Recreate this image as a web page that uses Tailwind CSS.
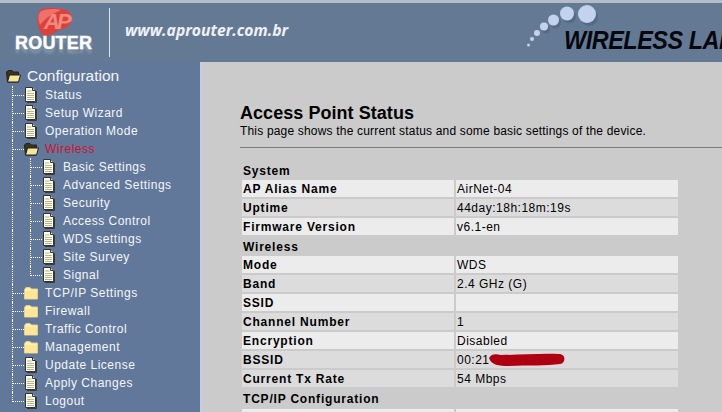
<!DOCTYPE html>
<html><head><meta charset="utf-8"><script src="https://cdn.jsdelivr.net/npm/@tailwindcss/browser@4"></script></head>
<body class="w-[722px] h-[412px] overflow-hidden bg-[#62789a] font-['Liberation_Sans',sans-serif]">
<svg class="hidden" width="0" height="0">
<symbol id="doc" viewBox="0 0 13 16"><path d="M1.500.5H8.500L11.500 3.500V14.500H1.500Z" fill="#fffff0" stroke="#333"/><path d="M8.500 .5V3.500H11.500" fill="#ddd" stroke="#333"/><path d="M3 4H7.500M3 6.500H10M3 8.500H10M3 10.500H10M3 12.500H10" stroke="#b4b484"/><path d="M12.500 4V15.500H3" stroke="#3a3a3a" fill="none"/></symbol>
<symbol id="fold" viewBox="0 0 15 14"><path d="M.5 3.500L2 1.500H6L7.500 3H13.500V13H.5Z" fill="#fff0b0" stroke="#e4cf80"/><path d="M1.500 5H13V12.500H1.500Z" fill="#ffe596"/></symbol>
<symbol id="open" viewBox="0 0 15 14"><path d="M.5 3L2 1.500H6L7.500 3H12.500V13H1.500Z" fill="#3b3418" stroke="#222"/><path d="M1.500 13L3.500 6H14.500L12.500 13Z" fill="#f6e69c" stroke="#222"/></symbol>
</svg>

<header class="h-[62px] relative border-t-[3px] border-[#b5bcc8] bg-[#647a94] overflow-hidden">
  <div class="absolute left-[35px] top-[5px] w-[38px] h-[30px]">
    <svg width="38" height="30" viewBox="0 0 38 30"><path d="M5 2C11-1 20 0 27 1C35 2 38 8 36 14C34 20 28 21 23 22C19 26 12 29 8 27C3 22 0 10 5 2Z" fill="#e0403a"/><path d="M5 4C12 0 21 1 26 2C19 5 11 9 5 17C3 12 3 7 5 4Z" fill="#f2706a"/></svg>
    <span class="absolute left-[9px] top-[2px] text-[22px] italic font-bold text-[#f08a80] tracking-[-3px] leading-[24px]">AP</span>
  </div>
  <span class="absolute left-[15px] top-[31px] font-bold text-[18px] leading-[18px] text-white tracking-[0.2px] [-webkit-text-stroke:0.4px_white] [text-shadow:0_4px_3px_rgba(255,255,255,0.25)]">ROUTER</span>
  <div class="absolute left-[109px] top-[5px] w-px h-[49px] bg-[#dfe4ea]"></div>
  <span class="absolute left-[125px] top-[18px] italic font-bold text-[15.7px] leading-[18px] text-[#eef1f5] font-['Open_Sans',sans-serif]">www.aprouter.com.br</span>
  <div class="absolute left-[527px] top-[0px]">
    <svg width="72" height="48" viewBox="0 0 72 48"><g fill="#566b85" transform="translate(2 3)"><circle cx="17" cy="23.500" r="4"/><circle cx="26.500" cy="17" r="5.500"/><circle cx="40" cy="10.500" r="7"/><circle cx="60" cy="11" r="9"/></g><g fill="#c3d2ee"><circle cx="1.500" cy="42" r="1.500"/><circle cx="5" cy="36" r="2"/><circle cx="10" cy="30" r="3"/><circle cx="17" cy="23.500" r="4"/><circle cx="26.500" cy="17" r="5.500"/><circle cx="40" cy="10.500" r="7"/><circle cx="60" cy="11" r="9"/></g></svg>
  </div>
  <span class="absolute left-[564px] top-[23px] italic font-bold text-[26px] leading-[28px] text-[#05070f] whitespace-nowrap origin-left scale-x-[0.9] tracking-[-0.5px]">WIRELESS LAN</span>
</header>

<div class="flex h-[350px]">
<nav class="w-[200px] shrink-0 text-[12px] text-[#f4f6f8] tracking-[0.5px]">
  <div class="h-[24px] pt-[5px] pb-[1px] flex items-center pl-[6px] gap-[6px] text-[15.5px] tracking-[0]"><svg width="15" height="14"><use href="#open"/></svg>Configuration</div>
  
  <div class="h-[18px] flex items-center ml-[12px]"><span class="h-full w-[12px] border-l border-dotted border-white"><span class="block mt-[9px] border-t border-dotted border-white"></span></span><svg width="13" height="16"><use href="#doc"/></svg><span class="ml-[8px]">Status</span></div>
  <div class="h-[18px] flex items-center ml-[12px]"><span class="h-full w-[12px] border-l border-dotted border-white"><span class="block mt-[9px] border-t border-dotted border-white"></span></span><svg width="13" height="16"><use href="#doc"/></svg><span class="ml-[8px]">Setup Wizard</span></div>
  <div class="h-[18px] flex items-center ml-[12px]"><span class="h-full w-[12px] border-l border-dotted border-white"><span class="block mt-[9px] border-t border-dotted border-white"></span></span><svg width="13" height="16"><use href="#doc"/></svg><span class="ml-[8px]">Operation Mode</span></div>
  <div class="h-[18px] flex items-center ml-[12px]"><span class="h-full w-[12px] border-l border-dotted border-white"><span class="block mt-[9px] border-t border-dotted border-white"></span></span><svg width="15" height="14"><use href="#open"/></svg><span class="ml-[6px] text-[#d01030]">Wireless</span></div>

  <div class="h-[18px] flex items-center ml-[12px]"><span class="h-full w-[18px] border-l border-dotted border-white"></span><span class="h-full w-[12px] border-l border-dotted border-white"><span class="block mt-[9px] border-t border-dotted border-white"></span></span><svg width="13" height="16"><use href="#doc"/></svg><span class="ml-[8px]">Basic Settings</span></div>
  <div class="h-[18px] flex items-center ml-[12px]"><span class="h-full w-[18px] border-l border-dotted border-white"></span><span class="h-full w-[12px] border-l border-dotted border-white"><span class="block mt-[9px] border-t border-dotted border-white"></span></span><svg width="13" height="16"><use href="#doc"/></svg><span class="ml-[8px]">Advanced Settings</span></div>
  <div class="h-[18px] flex items-center ml-[12px]"><span class="h-full w-[18px] border-l border-dotted border-white"></span><span class="h-full w-[12px] border-l border-dotted border-white"><span class="block mt-[9px] border-t border-dotted border-white"></span></span><svg width="13" height="16"><use href="#doc"/></svg><span class="ml-[8px]">Security</span></div>
  <div class="h-[18px] flex items-center ml-[12px]"><span class="h-full w-[18px] border-l border-dotted border-white"></span><span class="h-full w-[12px] border-l border-dotted border-white"><span class="block mt-[9px] border-t border-dotted border-white"></span></span><svg width="13" height="16"><use href="#doc"/></svg><span class="ml-[8px]">Access Control</span></div>
  <div class="h-[18px] flex items-center ml-[12px]"><span class="h-full w-[18px] border-l border-dotted border-white"></span><span class="h-full w-[12px] border-l border-dotted border-white"><span class="block mt-[9px] border-t border-dotted border-white"></span></span><svg width="13" height="16"><use href="#doc"/></svg><span class="ml-[8px]">WDS settings</span></div>
  <div class="h-[18px] flex items-center ml-[12px]"><span class="h-full w-[18px] border-l border-dotted border-white"></span><span class="h-full w-[12px] border-l border-dotted border-white"><span class="block mt-[9px] border-t border-dotted border-white"></span></span><svg width="13" height="16"><use href="#doc"/></svg><span class="ml-[8px]">Site Survey</span></div>
  <div class="h-[18px] flex items-center ml-[12px]"><span class="h-full w-[18px] border-l border-dotted border-white"></span><span class="h-[10px] self-start w-[12px] border-l border-b border-dotted border-white"></span><svg width="13" height="16"><use href="#doc"/></svg><span class="ml-[8px]">Signal</span></div>

  <div class="h-[18px] flex items-center ml-[12px]"><span class="h-full w-[12px] border-l border-dotted border-white"><span class="block mt-[9px] border-t border-dotted border-white"></span></span><svg width="15" height="14"><use href="#fold"/></svg><span class="ml-[6px]">TCP/IP Settings</span></div>
  <div class="h-[18px] flex items-center ml-[12px]"><span class="h-full w-[12px] border-l border-dotted border-white"><span class="block mt-[9px] border-t border-dotted border-white"></span></span><svg width="15" height="14"><use href="#fold"/></svg><span class="ml-[6px]">Firewall</span></div>
  <div class="h-[18px] flex items-center ml-[12px]"><span class="h-full w-[12px] border-l border-dotted border-white"><span class="block mt-[9px] border-t border-dotted border-white"></span></span><svg width="15" height="14"><use href="#fold"/></svg><span class="ml-[6px]">Traffic Control</span></div>
  <div class="h-[18px] flex items-center ml-[12px]"><span class="h-full w-[12px] border-l border-dotted border-white"><span class="block mt-[9px] border-t border-dotted border-white"></span></span><svg width="15" height="14"><use href="#fold"/></svg><span class="ml-[6px]">Management</span></div>
  <div class="h-[18px] flex items-center ml-[12px]"><span class="h-full w-[12px] border-l border-dotted border-white"><span class="block mt-[9px] border-t border-dotted border-white"></span></span><svg width="13" height="16"><use href="#doc"/></svg><span class="ml-[8px]">Update License</span></div>
  <div class="h-[18px] flex items-center ml-[12px]"><span class="h-full w-[12px] border-l border-dotted border-white"><span class="block mt-[9px] border-t border-dotted border-white"></span></span><svg width="13" height="16"><use href="#doc"/></svg><span class="ml-[8px]">Apply Changes</span></div>
  <div class="h-[18px] flex items-center ml-[12px]"><span class="h-[10px] self-start w-[12px] border-l border-b border-dotted border-white"></span><svg width="13" height="16"><use href="#doc"/></svg><span class="ml-[8px]">Logout</span></div>
</nav>

<main class="flex-1 bg-[#cbcbcb] border-l-2 border-[#c4cede] pl-[38px] pt-[41px] min-w-0 text-black overflow-hidden">
  <h1 class="text-[18px] leading-[20px] font-bold tracking-[0.05px]">Access Point Status</h1>
  <p class="text-[12px] leading-[14px] mt-[1px] whitespace-nowrap tracking-[0.18px]">This page shows the current status and some basic settings of the device.</p>
  <div class="h-[1px] bg-[#7a7a7a] mt-[9px] mb-[13px] -mr-[10px]"></div>
  <div class="w-[436px] ml-[2px] text-[12px] tracking-[0.5px]">
    <div class="h-[19px] flex items-center pl-[1px] font-bold tracking-[0.8px]">System</div>
    <div class="h-[19px] flex gap-[2px] pb-[2px]"><div class="w-[212px] bg-[#ececec] pl-[1px] pt-[1px] flex items-center font-bold tracking-[0.8px]">AP Alias Name</div><div class="flex-1 bg-[#ececec] pl-[1px] pt-[1px] flex items-center">AirNet-04</div></div>
    <div class="h-[19px] flex gap-[2px] pb-[2px]"><div class="w-[212px] bg-[#dcdcdc] pl-[1px] pt-[1px] flex items-center font-bold tracking-[0.8px]">Uptime</div><div class="flex-1 bg-[#dcdcdc] pl-[1px] pt-[1px] flex items-center">44day:18h:18m:19s</div></div>
    <div class="h-[19px] flex gap-[2px] pb-[2px]"><div class="w-[212px] bg-[#ececec] pl-[1px] pt-[1px] flex items-center font-bold tracking-[0.8px]">Firmware Version</div><div class="flex-1 bg-[#ececec] pl-[1px] pt-[1px] flex items-center">v6.1-en</div></div>
    <div class="h-[19px] flex items-center pl-[1px] font-bold tracking-[0.8px]">Wireless</div>
    <div class="h-[19px] flex gap-[2px] pb-[2px]"><div class="w-[212px] bg-[#ececec] pl-[1px] pt-[1px] flex items-center font-bold tracking-[0.8px]">Mode</div><div class="flex-1 bg-[#ececec] pl-[1px] pt-[1px] flex items-center">WDS</div></div>
    <div class="h-[19px] flex gap-[2px] pb-[2px]"><div class="w-[212px] bg-[#dcdcdc] pl-[1px] pt-[1px] flex items-center font-bold tracking-[0.8px]">Band</div><div class="flex-1 bg-[#dcdcdc] pl-[1px] pt-[1px] flex items-center">2.4 GHz (G)</div></div>
    <div class="h-[19px] flex gap-[2px] pb-[2px]"><div class="w-[212px] bg-[#ececec] pl-[1px] pt-[1px] flex items-center font-bold tracking-[0.8px]">SSID</div><div class="flex-1 bg-[#ececec] pl-[1px] pt-[1px] flex items-center"></div></div>
    <div class="h-[19px] flex gap-[2px] pb-[2px]"><div class="w-[212px] bg-[#dcdcdc] pl-[1px] pt-[1px] flex items-center font-bold tracking-[0.8px]">Channel Number</div><div class="flex-1 bg-[#dcdcdc] pl-[1px] pt-[1px] flex items-center">1</div></div>
    <div class="h-[19px] flex gap-[2px] pb-[2px]"><div class="w-[212px] bg-[#ececec] pl-[1px] pt-[1px] flex items-center font-bold tracking-[0.8px]">Encryption</div><div class="flex-1 bg-[#ececec] pl-[1px] pt-[1px] flex items-center">Disabled</div></div>
    <div class="h-[19px] flex gap-[2px] pb-[2px]"><div class="w-[212px] bg-[#dcdcdc] pl-[1px] pt-[1px] flex items-center font-bold tracking-[0.8px]">BSSID</div><div class="flex-1 bg-[#dcdcdc] pl-[1px] pt-[1px] flex items-center relative">00:21<svg class="absolute left-[31px] top-[1px]" width="80" height="16" viewBox="0 0 80 16"><path d="M2 6C5 1 9 2 14 3C30 3 55 1 72 2C79 2 79 11 73 12C60 14 40 13 22 14C12 14 4 13 2 6Z" fill="#ae0010"/></svg></div></div>
    <div class="h-[19px] flex gap-[2px] pb-[2px]"><div class="w-[212px] bg-[#dcdcdc] pl-[1px] pt-[1px] flex items-center font-bold tracking-[0.8px]">Current Tx Rate</div><div class="flex-1 bg-[#dcdcdc] pl-[1px] pt-[1px] flex items-center">54 Mbps</div></div>
    <div class="h-[19px] flex items-center pl-[1px] font-bold tracking-[0.8px]">TCP/IP Configuration</div>
    <div class="h-[19px] flex gap-[2px] pb-[2px] mt-[1px]"><div class="w-[212px] bg-[#ececec]"></div><div class="flex-1 bg-[#ececec]"></div></div>
  </div>
</main>
</div>
</body></html>
